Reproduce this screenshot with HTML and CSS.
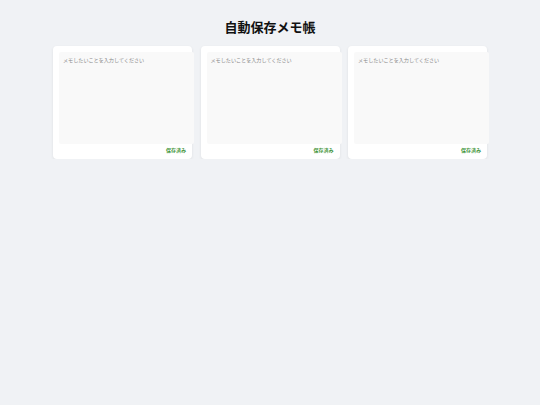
FILE: index.html
```html
<!DOCTYPE html>
<html lang="ja">
<head>
<meta charset="utf-8">
<title>自動保存メモ帳</title>
<link rel="stylesheet" href="styles.css">
</head>
<body>
<h1 class="title">自動保存メモ帳</h1>
<div class="memos">
  <div class="card">
    <textarea class="memo" placeholder="メモしたいことを入力してください"></textarea>
    <div class="status">保存済み</div>
  </div>
  <div class="card">
    <textarea class="memo" placeholder="メモしたいことを入力してください"></textarea>
    <div class="status">保存済み</div>
  </div>
  <div class="card">
    <textarea class="memo" placeholder="メモしたいことを入力してください"></textarea>
    <div class="status">保存済み</div>
  </div>
</div>
</body>
</html>
```
FILE: styles.css
```css
html, body {
  margin: 0;
  padding: 0;
}
body {
  background: #f0f2f5;
  font-family: "Noto Sans CJK JP", "Noto Sans", sans-serif;
  color: #111;
}
.title {
  font-size: 13px;
  line-height: 16px;
  font-weight: 700;
  text-align: center;
  margin: 19px 0 11px;
}
.memos {
  width: 434px;
  margin: 0 auto;
  display: grid;
  grid-template-columns: repeat(3, 1fr);
  gap: 8.5px;
}
.card {
  background: #fff;
  border-radius: 4px;
  box-shadow: 0 1px 3px rgba(0, 0, 0, 0.08);
  padding: 6px;
}
.memo {
  display: block;
  width: 100%;
  height: 84px;
  padding: 4px;
  margin: 0;
  border: none;
  background: #f9f9f9;
  border-radius: 2px;
  resize: none;
  font-family: "Noto Sans CJK JP", "Noto Sans", sans-serif;
  font-size: 5.1px;
  line-height: 7px;
  color: #333;
  outline: none;
}
.memo::placeholder {
  color: #8a8a8a;
}
.status {
  margin-top: 3px;
  font-size: 5px;
  line-height: 6px;
  text-align: right;
  color: #3f953a;
  font-weight: 700;
}
```
